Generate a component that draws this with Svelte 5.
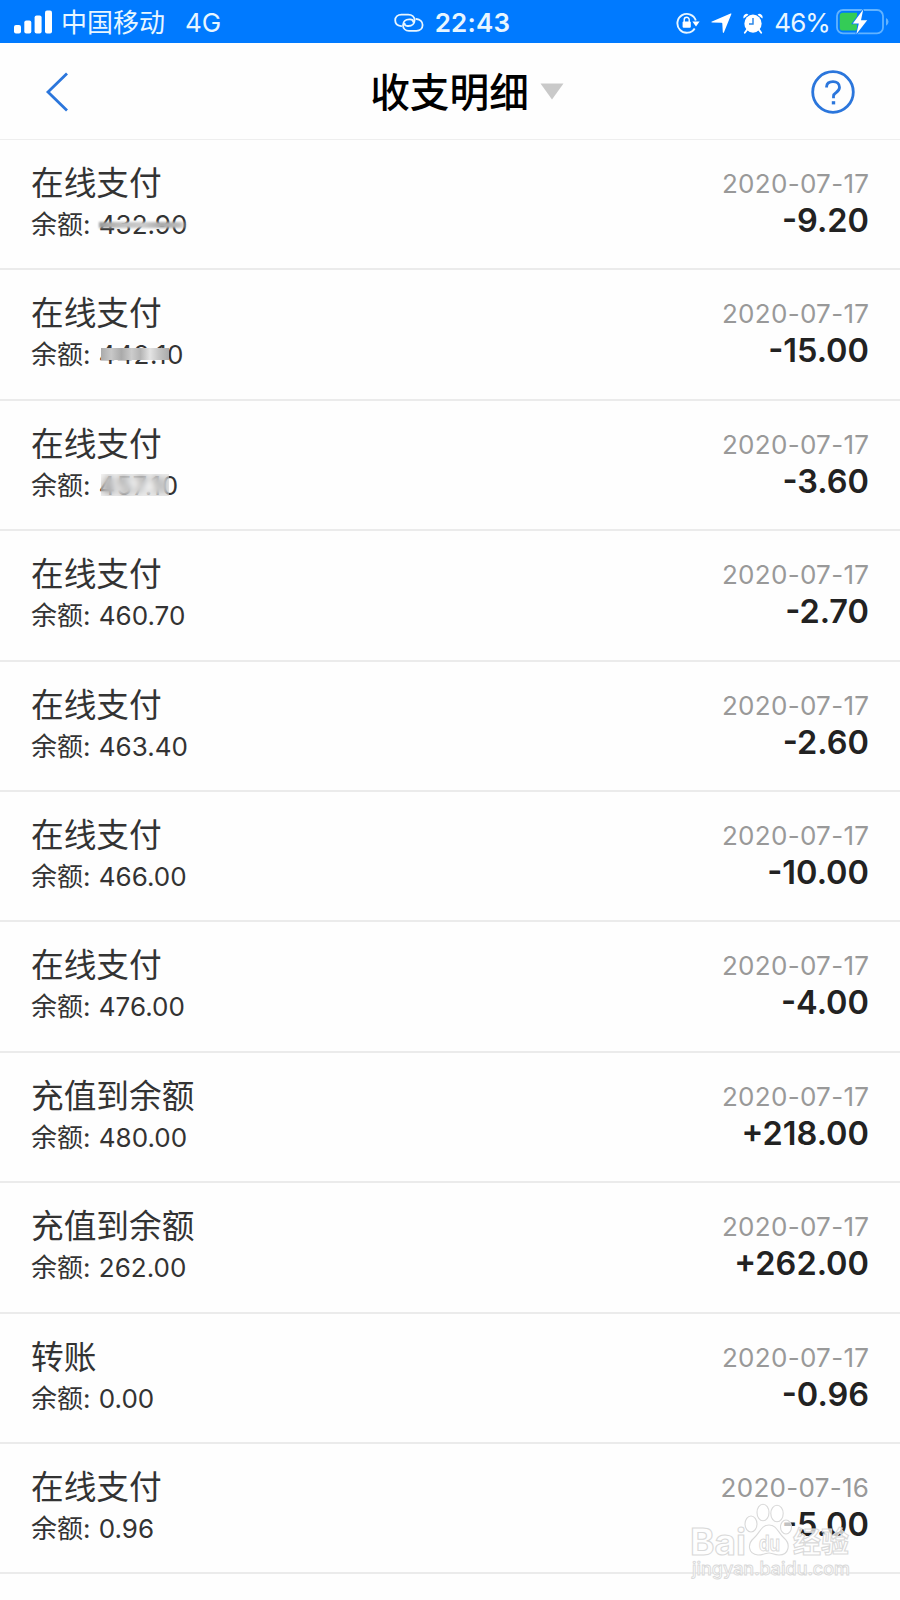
<script>
  const rows = [
    { title: '在线支付', balance: '432.90', date: '2020-07-17', amount: '-9.20', smear: 'line' },
    { title: '在线支付', balance: '442.10', date: '2020-07-17', amount: '-15.00', smear: 'band' },
    { title: '在线支付', balance: '457.10', date: '2020-07-17', amount: '-3.60', smear: 'block' },
    { title: '在线支付', balance: '460.70', date: '2020-07-17', amount: '-2.70' },
    { title: '在线支付', balance: '463.40', date: '2020-07-17', amount: '-2.60' },
    { title: '在线支付', balance: '466.00', date: '2020-07-17', amount: '-10.00' },
    { title: '在线支付', balance: '476.00', date: '2020-07-17', amount: '-4.00' },
    { title: '充值到余额', balance: '480.00', date: '2020-07-17', amount: '+218.00' },
    { title: '充值到余额', balance: '262.00', date: '2020-07-17', amount: '+262.00' },
    { title: '转账', balance: '0.00', date: '2020-07-17', amount: '-0.96' },
    { title: '在线支付', balance: '0.96', date: '2020-07-16', amount: '-5.00' }
  ];
</script>

<div class="page">
  <header class="status">
    <div class="left">
      <svg class="signal" width="38" height="24" viewBox="0 0 38 24" fill="#fff">
        <rect x="0" y="15" width="7" height="8.5" rx="2" />
        <rect x="10.3" y="10.5" width="7" height="13" rx="2" />
        <rect x="20.6" y="5.5" width="7" height="18" rx="2" />
        <rect x="31" y="0.5" width="7" height="23" rx="2" />
      </svg>
      <span class="carrier">中国移动</span>
      <span class="net">4G</span>
    </div>
    <div class="center">
      <svg width="30" height="20" viewBox="0 0 30 20" fill="none" stroke="#e8f6ff" stroke-width="1.8" stroke-linecap="round">
        <path d="M7.2 13.2C3.6 12.7 1.2 10.4 1.2 7.2C1.2 3.8 3.8 1.6 7.4 1.6H14.2C18 1.6 20.6 4 20.6 7.2C20.6 10.6 18 13 14.4 13H13.4C11.6 13 10.6 11.9 10.6 10.6" />
        <path d="M22.4 6C26 6.4 28.6 8.8 28.6 12C28.6 15.4 26 17.8 22.4 17.8H15C11.4 17.8 9 15.4 9 12.2C9 8.8 11.6 6.4 15.2 6.4H16.2C18 6.4 19.2 7.4 19.2 8.8" />
      </svg>
      <span class="time">22:43</span>
    </div>
    <div class="right">
      <svg class="lock" width="24" height="22" viewBox="0 0 24 22">
        <path d="M18.7 16.4A9.4 9.4 0 1 1 19.8 8.6" fill="none" stroke="#e8f6ff" stroke-width="1.9" />
        <path d="M16.3 9.4H23.6L20 14.4Z" fill="#fff" />
        <rect x="6.6" y="9.6" width="8.2" height="6.2" rx="1" fill="#fff" />
        <path d="M8.2 10V7.8a2.5 2.5 0 0 1 5 0V10" fill="none" stroke="#fff" stroke-width="1.4" />
      </svg>
      <svg class="arrow" width="21" height="21" viewBox="0 0 21 21"><path d="M19.6 .5Q20.8 .1 20.3 1.3L13 19.3Q12.2 20.8 11.8 19.2L11.3 10.4Q11.3 9.7 10.5 9.7L1 9.4Q-.4 9.2 1 8.5Z" fill="#fff" /></svg>
      <svg class="alarm" width="20" height="21" viewBox="0 0 22 22" preserveAspectRatio="none">
        <path d="M.7 5.8Q-.4 2.6 2.3 1.2Q4.5 .2 6 1.8ZM21.3 5.8Q22.4 2.6 19.7 1.2Q17.5 .2 16 1.8Z" fill="#fff" />
        <path d="M4.500 17.500 2 20.700M17.500 17.500 20 20.700" stroke="#fff" stroke-width="2" stroke-linecap="round" />
        <circle cx="11" cy="11.200" r="9.500" fill="#fff" />
        <path d="M11 5.300V11.600H6.600" fill="none" stroke="#2785e8" stroke-width="1.600" />
      </svg>
      <span class="pct">46%</span>
      <svg class="battery" width="54" height="26" viewBox="0 0 54 26">
        <rect x="1" y="1" width="46" height="23.4" rx="6" fill="none" stroke="#62b3ff" stroke-width="1.8" />
        <path d="M50 9Q52.5 10 52.5 12.7T50 16.8Z" fill="#62b3ff" />
        <path d="M7 3.8H21V21.6H7Q3.8 21.6 3.8 18.4V7Q3.8 3.8 7 3.8Z" fill="#34cc56" />
        <path d="M27.2 .5 16.8 14.4H22.8L20.3 25.2 31.2 11.2H25Z" fill="#fff" stroke="#0a7cf8" stroke-width="1.7" paint-order="stroke" />
      </svg>
    </div>
  </header>

  <nav class="nav">
    <svg class="back" width="24" height="40" viewBox="0 0 24 40"><path d="M22 1.6 3 20 22 38.4" fill="none" stroke="#2b76dc" stroke-width="2.8" /></svg>
    <div class="heading">
      <span>收支明细</span>
      <svg width="24" height="17" viewBox="0 0 24 17"><path d="M.5 .5H23.5L12 16.5Z" fill="#c9c9c9" /></svg>
    </div>
    <svg class="help" width="44" height="44" viewBox="0 0 44 44" fill="none" stroke="#2b76dc">
      <circle cx="22" cy="22" r="20.3" stroke-width="2.8" />
      <path d="M15.6 17.5V16.6C15.8 13.4 18.4 11.6 22 11.6C25.8 11.6 28.5 13.8 28.5 17.3C28.5 19.8 27.1 21.2 25.2 22.5C23.2 23.8 22.5 24.8 22.5 26.3V28.2" stroke-width="2.8" />
      <path d="M22.5 31.2V34.4" stroke-width="3.4" />
    </svg>
  </nav>

  <main>
    {#each rows as row}
      <section class="row">
        <div class="info">
          <div class="title">{row.title}</div>
          <div class="balance">余额: <span class="value" class:wide={row.smear === 'band' || row.smear === 'block'}>{row.balance}{#if row.smear}<i class={row.smear}></i>{/if}</span></div>
        </div>
        <div class="money">
          <div class="date">{row.date}</div>
          <div class="amount">{row.amount}</div>
        </div>
      </section>
    {/each}
  </main>

  <svg class="watermark" width="170" height="84" viewBox="0 0 170 84">
    <g fill="#fff" fill-opacity=".72" stroke="#d9d9d9" stroke-width="1.1">
      <text x="0" y="53" font-size="37" font-weight="700" textLength="56" lengthAdjust="spacingAndGlyphs">Bai</text>
      <ellipse cx="61" cy="22" rx="6" ry="8" />
      <ellipse cx="73" cy="10.5" rx="6" ry="8.3" />
      <ellipse cx="87" cy="11.5" rx="6.2" ry="8.3" />
      <ellipse cx="96" cy="25" rx="5.5" ry="7" />
      <path d="M79 23C87 23 88 31 94 36C101 42 99 53 89 53C84 53 82 51 79 51S73 53 68 53C58 52 57 42 64 36C70 31 71 23 79 23Z" />
      <text x="69" y="49" font-size="22" font-weight="700" textLength="21" lengthAdjust="spacingAndGlyphs">du</text>
      <text class="cn" x="103" y="51" font-size="29" font-weight="700" textLength="56" lengthAdjust="spacingAndGlyphs">经验</text>
      <text x="2" y="73" font-size="18" font-weight="500" textLength="158" lengthAdjust="spacingAndGlyphs" stroke-width=".9">jingyan.baidu.com</text>
    </g>
  </svg>
</div>

<style>
  :global(body) { background: #fff; overflow: hidden; }
  .page {
    position: relative;
    width: 900px;
    height: 1600px;
    overflow: hidden;
    background: #fefefe;
    font-family: Inter, "Noto Sans CJK SC", sans-serif;
    color: #333;
  }
  svg { display: block; flex: none; }
  .status {
    height: 43px;
    box-sizing: border-box;
    padding: 3px 10px 0 14px;
    display: grid;
    grid-template-columns: 1fr auto 1fr;
    align-items: center;
    background: #007aff;
    color: #e8f6ff;
    font-size: 26px;
    line-height: 40px;
    white-space: nowrap;
  }
  .left, .center, .right { display: flex; align-items: center; height: 40px; }
  .right { justify-content: flex-end; }
  .signal { margin-top: -3px; }
  .carrier { margin-left: 9px; }
  .net { margin-left: 20px; }
  .center { gap: 11px; }
  .time { font-weight: 600; letter-spacing: .2px; }
  .arrow { margin-left: 11px; }
  .alarm { margin-left: 11px; }
  .pct { margin-left: 11px; letter-spacing: -.9px; }
  .battery { margin: -2px 0 0 6px; }
  .nav {
    height: 97px;
    box-sizing: border-box;
    padding: 1px 45px 0;
    border-bottom: 1px solid #eee;
    display: grid;
    grid-template-columns: 1fr auto 1fr;
    align-items: center;
  }
  .heading {
    display: flex;
    align-items: center;
    gap: 11px;
    padding-left: 34px;
    color: #000;
    font-size: 39.7px;
    font-weight: 500;
    line-height: 60px;
  }
  .heading span { position: relative; top: 1px; }
  .help { justify-self: end; }
  .row {
    height: 130.4px;
    box-sizing: border-box;
    padding: 23px 31px 0;
    border-bottom: 2px solid #ebebeb;
    display: flex;
    justify-content: space-between;
  }
  .title { font-size: 32.7px; line-height: 41px; }
  .balance { font-size: 26px; line-height: 42px; font-feature-settings: "calt" 0; }
  .value { position: relative; margin-left: 1px; }
  .wide { letter-spacing: .6px; }
  .value i { position: absolute; display: block; }
  .line {
    left: 0; top: 13px; width: 89px; height: 6px;
    background: linear-gradient(90deg, #999, #bbb 20%, #ccc 50%, #aaa 70%, #bbb 90%, transparent);
    filter: blur(1px);
  }
  .band {
    left: 2px; top: 9px; width: 68px; height: 12px;
    background: linear-gradient(90deg, #aaa, #c8c8c8 15%, #aaa 30%, #ccc 45%, #b4b4b4 58%, #e4e4e4 72%, #c5c5c5 85%, #aaa);
  }
  .block {
    left: 2px; top: 4px; width: 68px; height: 22px;
    backdrop-filter: blur(3.5px);
    background: #dddddd55;
  }
  .money { text-align: right; }
  .date { color: #999; font-size: 26px; line-height: 41px; letter-spacing: .3px; margin-right: -.3px; }
  .amount { color: #222; font-size: 32.5px; font-weight: 600; line-height: 34px; }
  .watermark { position: absolute; left: 690px; top: 1502px; font-family: Inter, sans-serif; }
  .cn { font-family: "Noto Sans CJK SC", sans-serif; }
</style>
